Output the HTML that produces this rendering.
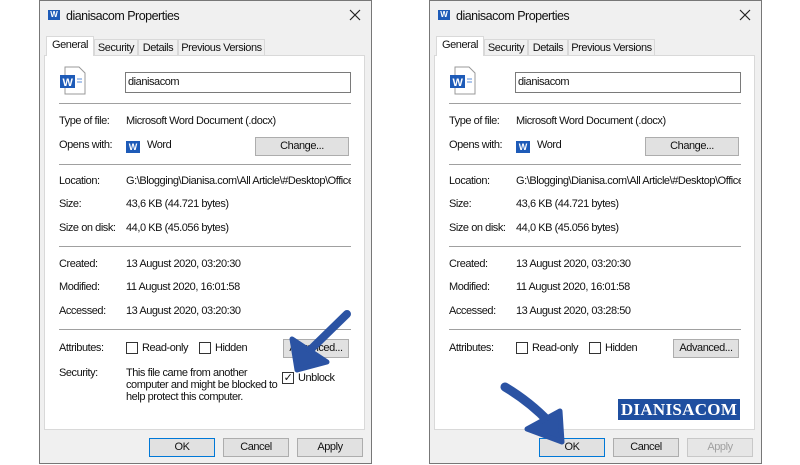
<!DOCTYPE html>
<html><head><meta charset="utf-8"><style>
*{box-sizing:border-box;margin:0;padding:0}
body{width:800px;height:465px;background:#fff;position:relative;overflow:hidden;font-family:"Liberation Sans",sans-serif;font-size:11px;letter-spacing:-0.45px;color:#111}
.d{position:absolute;top:0;width:333px;height:464px;background:#f0f0f0;border:1px solid #777}
.a{position:absolute;white-space:nowrap}
.panel{position:absolute;left:4px;top:54px;width:321px;height:375px;background:#fff;border:1px solid #d9d9d9}
.tab{position:absolute;top:38px;height:17px;background:#f0f0f0;border:1px solid #d9d9d9;border-bottom:none;padding:2px 0 0;text-align:center;white-space:nowrap}
.tab.sel{top:35px;height:20px;background:#fff;z-index:2;padding-top:2px}
.sep{position:absolute;left:19px;width:292px;height:1px;background:#a0a0a0}
.btn{position:absolute;height:19px;background:#e1e1e1;border:1px solid #adadad;text-align:center;line-height:17px}
.cb{position:absolute;width:12px;height:12px;border:1px solid #333;background:#fff}
.wi{position:absolute;width:14px;height:12px;background:#1e5bb8;color:#fff;font-weight:bold;font-size:9px;line-height:12px;text-align:center;letter-spacing:0}
.t{position:absolute;left:26px;top:8px;font-size:12.5px;letter-spacing:-0.5px;white-space:nowrap}
</style></head><body>

<!-- LEFT DIALOG -->
<div class="d" style="left:39px">
 <div class="wi" style="left:8px;top:9px;width:12px;height:10px;font-size:8px;line-height:10px">W</div>
 <div class="t">dianisacom Properties</div>
 <svg class="a" style="left:309px;top:8px" width="12" height="12"><path d="M1 1L11 11M11 1L1 11" stroke="#222" stroke-width="1.2"/></svg>
 <div class="tab sel" style="left:6px;width:48px">General</div>
 <div class="tab" style="left:54px;width:44px">Security</div>
 <div class="tab" style="left:98px;width:40px">Details</div>
 <div class="tab" style="left:138px;width:87px">Previous Versions</div>
 <div class="panel"></div>
 <svg class="a" style="left:19px;top:65px" width="28" height="30"><path d="M6 1h14l6 6v21H6z" fill="#fff" stroke="#999"/><rect x="1" y="9" width="15" height="13" fill="#1e5bb8"/><text x="8.5" y="20" font-size="11" font-weight="bold" fill="#fff" text-anchor="middle" font-family="Liberation Sans">W</text><path d="M18 13h5M18 16h5" stroke="#5b8ed8"/></svg>
 <div class="a" style="left:85px;top:71px;width:226px;height:21px;border:1px solid #7a7a7a;background:#fff;padding:3px 2px">dianisacom</div>
 <div class="sep" style="top:102px"></div>
 <div class="a" style="left:19px;top:114px">Type of file:</div>
 <div class="a" style="left:86px;top:114px">Microsoft Word Document (.docx)</div>
 <div class="a" style="left:19px;top:138px">Opens with:</div>
 <div class="wi" style="left:86px;top:140px">W</div>
 <div class="a" style="left:107px;top:138px">Word</div>
 <div class="btn" style="left:215px;top:136px;width:94px">Change...</div>
 <div class="sep" style="top:163px"></div>
 <div class="a" style="left:19px;top:174px">Location:</div>
 <div class="a" style="left:86px;top:174px;width:225px;overflow:hidden">G:\Blogging\Dianisa.com\All Article\#Desktop\Office</div>
 <div class="a" style="left:19px;top:197px">Size:</div>
 <div class="a" style="left:86px;top:197px">43,6 KB (44.721 bytes)</div>
 <div class="a" style="left:19px;top:221px">Size on disk:</div>
 <div class="a" style="left:86px;top:221px">44,0 KB (45.056 bytes)</div>
 <div class="sep" style="top:245px"></div>
 <div class="a" style="left:19px;top:257px">Created:</div>
 <div class="a" style="left:86px;top:257px">13 August 2020, 03:20:30</div>
 <div class="a" style="left:19px;top:280px">Modified:</div>
 <div class="a" style="left:86px;top:280px">11 August 2020, 16:01:58</div>
 <div class="a" style="left:19px;top:304px">Accessed:</div>
 <div class="a" style="left:86px;top:304px">13 August 2020, 03:20:30</div>
 <div class="sep" style="top:328px"></div>
 <div class="a" style="left:19px;top:341px">Attributes:</div>
 <div class="cb" style="left:86px;top:341px"></div><div class="a" style="left:102px;top:341px">Read-only</div>
 <div class="cb" style="left:159px;top:341px"></div><div class="a" style="left:175px;top:341px">Hidden</div>
 <div class="btn" style="left:243px;top:338px;width:66px">Advanced...</div>
 <div class="a" style="left:19px;top:366px">Security:</div>
 <div class="a" style="left:86px;top:366px;line-height:12px;white-space:normal;width:160px">This file came from another computer and might be blocked to help protect this computer.</div>
 <div class="cb" style="left:242px;top:371px;font-size:11px;line-height:10px;text-align:center">✓</div>
 <div class="a" style="left:258px;top:371px">Unblock</div>
 <div class="btn" style="left:109px;top:437px;width:66px;border:1px solid #0078d7">OK</div>
 <div class="btn" style="left:183px;top:437px;width:66px">Cancel</div>
 <div class="btn" style="left:257px;top:437px;width:66px">Apply</div>
</div>

<!-- RIGHT DIALOG -->
<div class="d" style="left:429px">
 <div class="wi" style="left:8px;top:9px;width:12px;height:10px;font-size:8px;line-height:10px">W</div>
 <div class="t">dianisacom Properties</div>
 <svg class="a" style="left:309px;top:8px" width="12" height="12"><path d="M1 1L11 11M11 1L1 11" stroke="#222" stroke-width="1.2"/></svg>
 <div class="tab sel" style="left:6px;width:48px">General</div>
 <div class="tab" style="left:54px;width:44px">Security</div>
 <div class="tab" style="left:98px;width:40px">Details</div>
 <div class="tab" style="left:138px;width:87px">Previous Versions</div>
 <div class="panel"></div>
 <svg class="a" style="left:19px;top:65px" width="28" height="30"><path d="M6 1h14l6 6v21H6z" fill="#fff" stroke="#999"/><rect x="1" y="9" width="15" height="13" fill="#1e5bb8"/><text x="8.5" y="20" font-size="11" font-weight="bold" fill="#fff" text-anchor="middle" font-family="Liberation Sans">W</text><path d="M18 13h5M18 16h5" stroke="#5b8ed8"/></svg>
 <div class="a" style="left:85px;top:71px;width:226px;height:21px;border:1px solid #7a7a7a;background:#fff;padding:3px 2px">dianisacom</div>
 <div class="sep" style="top:102px"></div>
 <div class="a" style="left:19px;top:114px">Type of file:</div>
 <div class="a" style="left:86px;top:114px">Microsoft Word Document (.docx)</div>
 <div class="a" style="left:19px;top:138px">Opens with:</div>
 <div class="wi" style="left:86px;top:140px">W</div>
 <div class="a" style="left:107px;top:138px">Word</div>
 <div class="btn" style="left:215px;top:136px;width:94px">Change...</div>
 <div class="sep" style="top:163px"></div>
 <div class="a" style="left:19px;top:174px">Location:</div>
 <div class="a" style="left:86px;top:174px;width:225px;overflow:hidden">G:\Blogging\Dianisa.com\All Article\#Desktop\Office</div>
 <div class="a" style="left:19px;top:197px">Size:</div>
 <div class="a" style="left:86px;top:197px">43,6 KB (44.721 bytes)</div>
 <div class="a" style="left:19px;top:221px">Size on disk:</div>
 <div class="a" style="left:86px;top:221px">44,0 KB (45.056 bytes)</div>
 <div class="sep" style="top:245px"></div>
 <div class="a" style="left:19px;top:257px">Created:</div>
 <div class="a" style="left:86px;top:257px">13 August 2020, 03:20:30</div>
 <div class="a" style="left:19px;top:280px">Modified:</div>
 <div class="a" style="left:86px;top:280px">11 August 2020, 16:01:58</div>
 <div class="a" style="left:19px;top:304px">Accessed:</div>
 <div class="a" style="left:86px;top:304px">13 August 2020, 03:28:50</div>
 <div class="sep" style="top:328px"></div>
 <div class="a" style="left:19px;top:341px">Attributes:</div>
 <div class="cb" style="left:86px;top:341px"></div><div class="a" style="left:102px;top:341px">Read-only</div>
 <div class="cb" style="left:159px;top:341px"></div><div class="a" style="left:175px;top:341px">Hidden</div>
 <div class="btn" style="left:243px;top:338px;width:66px">Advanced...</div>
 <div class="a" style="left:188px;top:398px;width:122px;height:21px;background:#1f4fa0;color:#fff;font-family:'Liberation Serif',serif;font-weight:bold;font-size:17px;line-height:21px;text-align:center;letter-spacing:0.3px">DIANISACOM</div>
 <div class="btn" style="left:109px;top:437px;width:66px;border:1px solid #0078d7">OK</div>
 <div class="btn" style="left:183px;top:437px;width:66px">Cancel</div>
 <div class="btn" style="left:257px;top:437px;width:66px;color:#a0a0a0;background:#e6e6e6;border-color:#c8c8c8">Apply</div>
</div>

<svg class="a" style="left:0;top:0" width="800" height="465">
 <g fill="#2b53a3" stroke="#2b53a3" stroke-linejoin="round" stroke-linecap="round">
  <path d="M347 314 L306 354" stroke-width="8" fill="none"/>
  <path d="M292 339 L297 370 L327 362 Z" stroke-width="5"/>
  <path d="M505 387 Q530 402 549 422" stroke-width="9" fill="none"/>
  <path d="M560 411 L527 429 L562 442 Z" stroke-width="5"/>
 </g>
</svg>
</body></html>
